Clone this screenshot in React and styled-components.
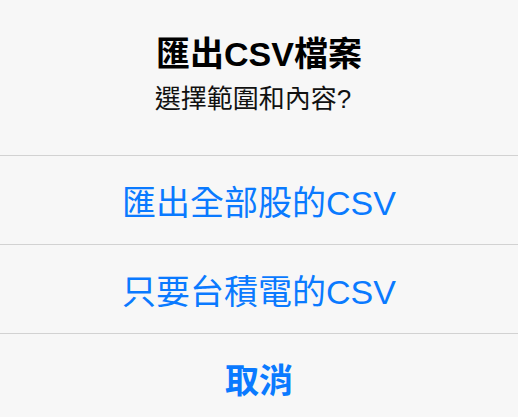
import React from 'react';
import styled, {createGlobalStyle} from 'styled-components';

const GlobalStyle = createGlobalStyle`
    body {
        margin: 0;
        background: #f7f7f7;
        font-family: "Liberation Sans", "Noto Sans CJK TC", sans-serif;
    }
`;

const Sheet = styled.div`
    width: 518px;
    height: 417px;
    overflow: hidden;
    background: #f7f7f7;
    display: flex;
    flex-direction: column;
`;

const Header = styled.div`
    display: flex;
    flex-direction: column;
    align-items: center;
    padding: 34px 0 40px;
    gap: 9px;
`;

const Title = styled.h1`
    margin: 0;
    font-size: 34px;
    line-height: 40px;
    font-weight: 700;
    color: #000;
`;

const Message = styled.p`
    margin: 0;
    padding-right: 12px;
    font-size: 26px;
    line-height: 32px;
    color: #111;
`;

const Action = styled.button`
    flex: 0 0 89px;
    display: flex;
    align-items: center;
    justify-content: center;
    border: none;
    border-top: 1px solid #d2d2d2;
    background: transparent;
    padding: 0;
    font-family: inherit;
    font-size: 34px;
    font-weight: ${(props) => (props.bold ? 700 : 400)};
    color: #0a7aff;
`;

const App = () => {
    return (
        <Sheet>
            <GlobalStyle/>
            <Header>
                <Title>匯出CSV檔案</Title>
                <Message>選擇範圍和內容?</Message>
            </Header>
            <Action>匯出全部股的CSV</Action>
            <Action>只要台積電的CSV</Action>
            <Action bold>取消</Action>
        </Sheet>
    )
};

export default App;
